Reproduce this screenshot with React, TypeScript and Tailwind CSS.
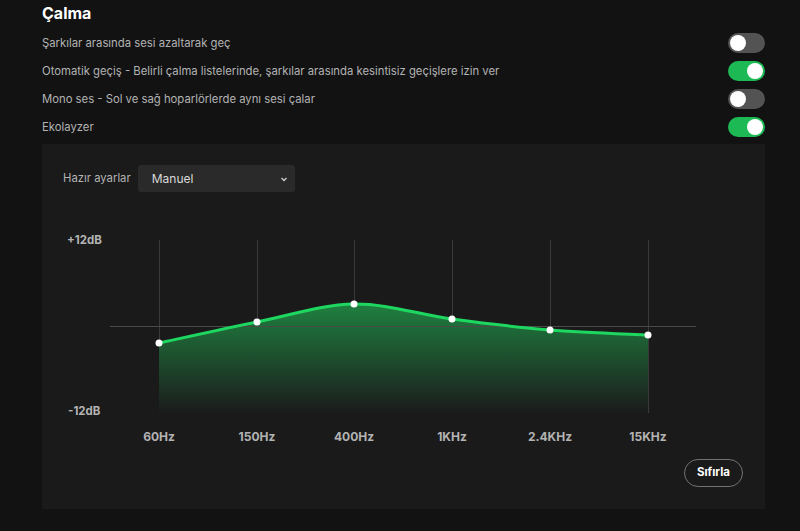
import React from "react";

const font = { fontFamily: "Inter, 'Noto Sans', sans-serif" };

const rows = [
  { label: "Şarkılar arasında sesi azaltarak geç", on: false },
  {
    label:
      "Otomatik geçiş - Belirli çalma listelerinde, şarkılar arasında kesintisiz geçişlere izin ver",
    on: true,
  },
  { label: "Mono ses - Sol ve sağ hoparlörlerde aynı sesi çalar", on: false },
  { label: "Ekolayzer", on: true },
];

const bands = [
  { f: "60Hz", x: 117, y: 123 },
  { f: "150Hz", x: 215, y: 102 },
  { f: "400Hz", x: 312, y: 84 },
  { f: "1KHz", x: 410, y: 99 },
  { f: "2.4KHz", x: 508, y: 110 },
  { f: "15KHz", x: 606, y: 115 },
];

function curvePath(pts: { x: number; y: number }[]) {
  let d = `M${pts[0].x},${pts[0].y}`;
  for (let i = 0; i < pts.length - 1; i++) {
    const p0 = pts[i - 1] || pts[i];
    const p1 = pts[i];
    const p2 = pts[i + 1];
    const p3 = pts[i + 2] || p2;
    const c1x = p1.x + (p2.x - p0.x) / 6;
    const c1y = p1.y + (p2.y - p0.y) / 6;
    const c2x = p2.x - (p3.x - p1.x) / 6;
    const c2y = p2.y - (p3.y - p1.y) / 6;
    d += ` C${c1x},${c1y} ${c2x},${c2y} ${p2.x},${p2.y}`;
  }
  return d;
}

function Toggle({ on }: { on: boolean }) {
  return (
    <div
      className={`flex h-5 w-[37px] items-center rounded-full px-[2px] ${
        on ? "justify-end bg-[#1db954]" : "justify-start bg-[#535353]"
      }`}
    >
      <div className="h-4 w-4 rounded-full bg-white" />
    </div>
  );
}

function Chart() {
  const line = curvePath(bands);
  const first = bands[0];
  const last = bands[bands.length - 1];
  const area = `${line} L${last.x},193 L${first.x},193 Z`;
  return (
    <svg width="723" height="236" viewBox="0 0 723 236" className="block">
      <defs>
        <linearGradient id="eqfill" x1="0" y1="84" x2="0" y2="193" gradientUnits="userSpaceOnUse">
          <stop offset="0" stopColor="#1f8040" />
          <stop offset="1" stopColor="#1b1b1b" />
        </linearGradient>
      </defs>
      {bands.map((b) => (
        <line key={b.f} x1={b.x + 0.5} y1="20" x2={b.x + 0.5} y2="193" stroke="#3a3a3a" strokeWidth="1" />
      ))}
      <path d={area} fill="url(#eqfill)" />
      <line x1="68" y1="106.5" x2="654" y2="106.5" stroke="#4a4a4a" strokeWidth="1" />
      <path d={line} fill="none" stroke="#1ed760" strokeWidth="3" strokeLinecap="round" />
      {bands.map((b) => (
        <circle key={b.f} cx={b.x} cy={b.y} r="3.5" fill="#fff" />
      ))}
      <text x="25" y="24" fill="#b3b3b3" fontSize="11.5" fontWeight="700" style={font}>
        +12dB
      </text>
      <text x="26" y="195" fill="#b3b3b3" fontSize="11.5" fontWeight="700" style={font}>
        -12dB
      </text>
      {bands.map((b) => (
        <text
          key={b.f}
          x={b.x}
          y="221"
          fill="#b3b3b3"
          fontSize="12"
          fontWeight="700"
          textAnchor="middle"
          style={font}
        >
          {b.f}
        </text>
      ))}
    </svg>
  );
}

export default function App() {
  return (
    <div className="h-[531px] w-[800px] overflow-hidden bg-[#121212] pl-[42px] pr-[35px] pt-[3px]" style={font}>
      <h2 className="text-[16px] font-bold leading-[20px] text-white">Çalma</h2>
      <div className="mt-[6px] flex flex-col">
        {rows.map((r) => (
          <div key={r.label} className="flex h-7 items-center justify-between">
            <span className="text-[11.3px] text-[#b3b3b3]">{r.label}</span>
            <Toggle on={r.on} />
          </div>
        ))}
      </div>
      <div className="mt-[3px] h-[365px] w-[723px] bg-[#1a1a1a]">
        <div className="flex items-center pl-[21px] pt-[21px]">
          <span className="text-[11.3px] text-[#b3b3b3]">Hazır ayarlar</span>
          <div className="ml-[7px] flex h-[27px] w-[157px] items-center justify-between rounded-[3px] bg-[#2a2a2a] pl-[14px] pr-[6px]">
            <span className="text-[12px] text-[#d9d9d9]">Manuel</span>
            <svg width="10" height="10" viewBox="0 0 10 10">
              <path d="M2.5 4 L5 6.5 L7.5 4" fill="none" stroke="#cfcfcf" strokeWidth="1.3" />
            </svg>
          </div>
        </div>
        <div className="mt-[28px]">
          <Chart />
        </div>
        <div className="flex justify-end pr-[22px] pt-[3px]">
          <button className="h-[28px] rounded-full border border-[#727272] px-[12px] text-[11.5px] font-bold text-white">
            Sıfırla
          </button>
        </div>
      </div>
    </div>
  );
}
